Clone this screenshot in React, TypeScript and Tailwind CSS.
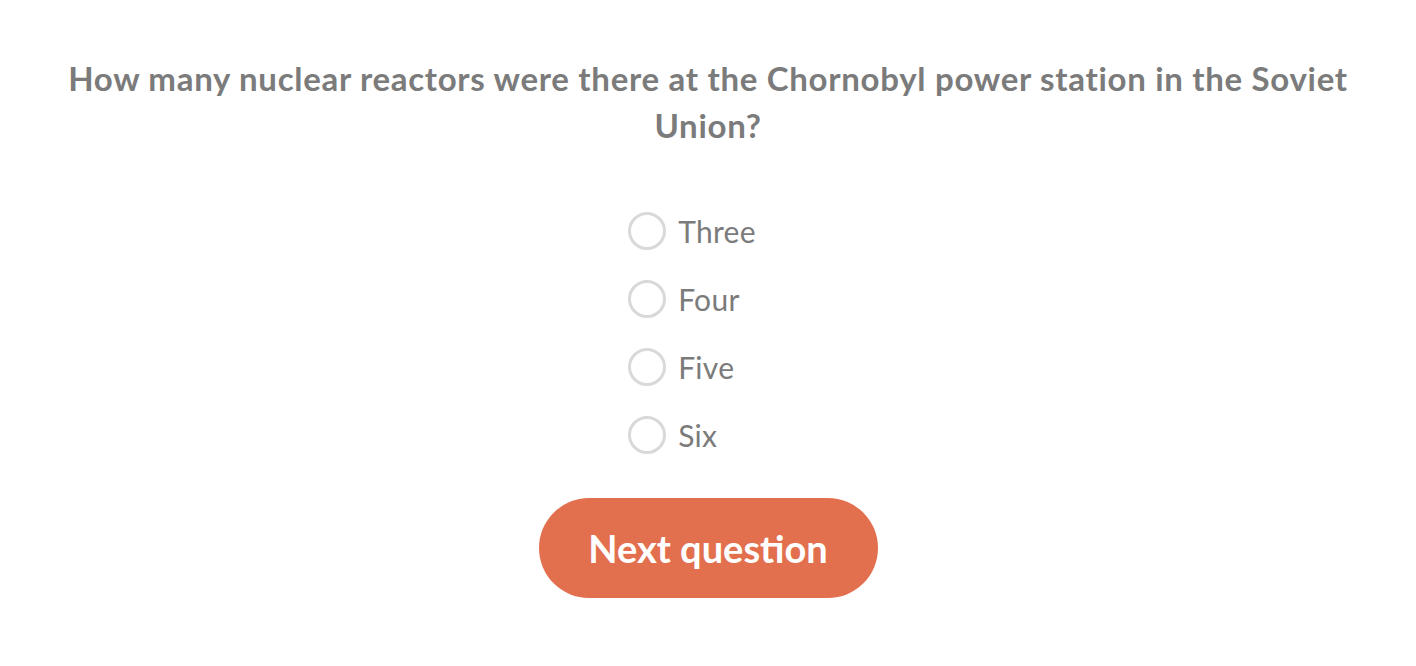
import { useState } from 'react';

const options = ['Three', 'Four', 'Five', 'Six'];

export default function App() {
  const [selected, setSelected] = useState<string | null>(null);

  return (
    <div className="min-h-[666px] bg-white flex flex-col items-center pt-[55px]" style={{ fontFamily: 'Lato, "Open Sans", sans-serif' }}>
      {/* Question */}
      <h1 className="w-[1300px] text-center text-[33px] leading-[47px] tracking-[0.7px] font-bold text-[#7b7b7b]">
        How many nuclear reactors were there at the Chornobyl power station in the Soviet Union?
      </h1>

      {/* Options */}
      <div className="mt-[63px] flex flex-col gap-[30px] ml-[-32px]">
        {options.map((opt) => (
          <label key={opt} className="flex items-center gap-[12px] cursor-pointer h-[38px]">
            <span
              onClick={() => setSelected(opt)}
              className={`w-[38px] h-[38px] rounded-full border-[3px] ${selected === opt ? 'border-[#e2704f]' : 'border-[#d9d9d9]'}`}
            />
            <span className="text-[30px] tracking-[0.3px] text-[#7b7b7b]">{opt}</span>
          </label>
        ))}
      </div>

      {/* Button */}
      <button className="mt-[44px] w-[339px] h-[100px] rounded-full bg-[#e2704f] text-white text-[38px] font-bold">
        Next question
      </button>
    </div>
  );
}
